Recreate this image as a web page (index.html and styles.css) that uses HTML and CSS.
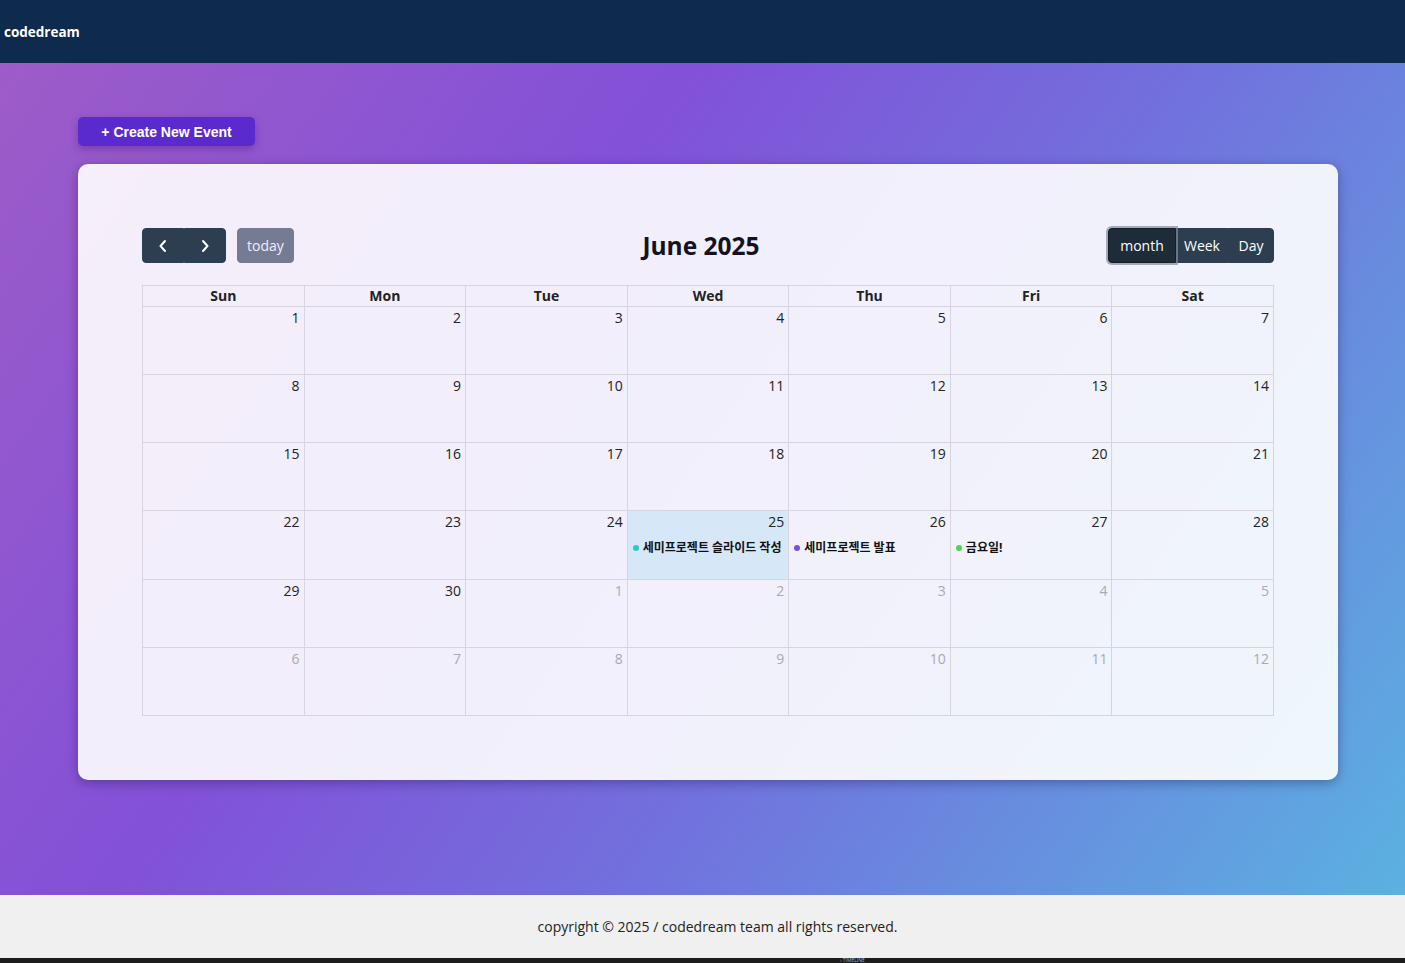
FILE: index.html
```html
<!DOCTYPE html>
<html lang="ko">
<head>
<meta charset="utf-8">
<title>codedream calendar</title>
<link rel="stylesheet" href="styles.css">
</head>
<body>
<header class="topbar"><span class="brand">codedream</span></header>
<main class="main">
  <button class="create-btn">+ Create New Event</button>
  <section class="card">
    <div class="toolbar">
      <div class="tb-left">
        <div class="btn-group">
          <button class="fc-btn icon-btn" aria-label="prev"><svg width="10" height="14" viewBox="0 0 10 14"><path d="M7 2 L2.5 7 L7 12" fill="none" stroke="#fff" stroke-width="2" stroke-linecap="round" stroke-linejoin="round"/></svg></button>
          <button class="fc-btn icon-btn" aria-label="next"><svg width="10" height="14" viewBox="0 0 10 14"><path d="M3 2 L7.5 7 L3 12" fill="none" stroke="#fff" stroke-width="2" stroke-linecap="round" stroke-linejoin="round"/></svg></button>
        </div>
        <button class="fc-btn today-btn">today</button>
      </div>
      <h2 class="title">June 2025</h2>
      <div class="btn-group views">
        <button class="fc-btn view v-month active">month</button>
        <button class="fc-btn view v-week">Week</button>
        <button class="fc-btn view v-day">Day</button>
      </div>
    </div>
    <div class="grid">
      <div class="head">Sun</div><div class="head">Mon</div><div class="head">Tue</div><div class="head">Wed</div><div class="head">Thu</div><div class="head">Fri</div><div class="head">Sat</div>
      <div class="body">
        <div class="day"><span class="num">1</span></div>
        <div class="day"><span class="num">2</span></div>
        <div class="day"><span class="num">3</span></div>
        <div class="day"><span class="num">4</span></div>
        <div class="day"><span class="num">5</span></div>
        <div class="day"><span class="num">6</span></div>
        <div class="day"><span class="num">7</span></div>
        <div class="day"><span class="num">8</span></div>
        <div class="day"><span class="num">9</span></div>
        <div class="day"><span class="num">10</span></div>
        <div class="day"><span class="num">11</span></div>
        <div class="day"><span class="num">12</span></div>
        <div class="day"><span class="num">13</span></div>
        <div class="day"><span class="num">14</span></div>
        <div class="day"><span class="num">15</span></div>
        <div class="day"><span class="num">16</span></div>
        <div class="day"><span class="num">17</span></div>
        <div class="day"><span class="num">18</span></div>
        <div class="day"><span class="num">19</span></div>
        <div class="day"><span class="num">20</span></div>
        <div class="day"><span class="num">21</span></div>
        <div class="day"><span class="num">22</span></div>
        <div class="day"><span class="num">23</span></div>
        <div class="day"><span class="num">24</span></div>
        <div class="day today"><span class="num">25</span><div class="event"><i class="dot dot-teal"></i>세미프로젝트 슬라이드 작성</div></div>
        <div class="day"><span class="num">26</span><div class="event"><i class="dot dot-purple"></i>세미프로젝트 발표</div></div>
        <div class="day"><span class="num">27</span><div class="event"><i class="dot dot-green"></i>금요일!</div></div>
        <div class="day"><span class="num">28</span></div>
        <div class="day"><span class="num">29</span></div>
        <div class="day"><span class="num">30</span></div>
        <div class="day other"><span class="num">1</span></div>
        <div class="day other"><span class="num">2</span></div>
        <div class="day other"><span class="num">3</span></div>
        <div class="day other"><span class="num">4</span></div>
        <div class="day other"><span class="num">5</span></div>
        <div class="day other"><span class="num">6</span></div>
        <div class="day other"><span class="num">7</span></div>
        <div class="day other"><span class="num">8</span></div>
        <div class="day other"><span class="num">9</span></div>
        <div class="day other"><span class="num">10</span></div>
        <div class="day other"><span class="num">11</span></div>
        <div class="day other"><span class="num">12</span></div>
      </div>
    </div>
  </section>
</main>
<footer class="footer">copyright © 2025 / codedream team all rights reserved.</footer>
<div class="strip"><span class="strip-text">› TIMELINE</span></div>
</body>
</html>
```

FILE: styles.css
```css
* { box-sizing: border-box; }
html, body { margin: 0; padding: 0; }
body {
  font-family: "Open Sans", "Noto Sans CJK KR", sans-serif;
  color: #222;
  overflow: hidden;
}
.topbar {
  height: 63px;
  background: #0e2a4d;
  display: flex;
  align-items: center;
  padding-left: 4px;
}
.brand {
  color: #fff;
  font-weight: 700;
  font-size: 13.5px;
}
.main {
  height: 832px;
  padding: 54px 67px 0 78px;
  background: linear-gradient(125deg, #9d5cc8 0%, #8251d8 35%, #7270dd 60%, #5bb1e1 100%);
}
.create-btn {
  display: block;
  height: 29px;
  width: 177px;
  border: none;
  border-radius: 5px;
  background: #5b2ace;
  color: #fff;
  font-family: "Liberation Sans", Arial, sans-serif;
  font-weight: 700;
  font-size: 14px;
  box-shadow: 0 3px 8px rgba(40, 0, 90, 0.3);
  margin-bottom: 18px;
  padding: 0;
}
.card {
  width: 1260px;
  background: rgba(255, 255, 255, 0.9);
  border-radius: 10px;
  box-shadow: 0 3px 12px rgba(20, 10, 60, 0.35);
  padding: 64px;
}
.toolbar {
  display: flex;
  justify-content: space-between;
  align-items: center;
  height: 35px;
  margin-bottom: 22px;
}
.tb-left { display: flex; align-items: center; gap: 11px; }
.btn-group { display: flex; }
.fc-btn {
  height: 35px;
  border: 1px solid #2c3e50;
  background: #2c3e50;
  color: #fff;
  font-family: "Open Sans", sans-serif;
  font-size: 14px;
  padding: 0;
  margin: 0;
  border-radius: 0;
  display: flex;
  align-items: center;
  justify-content: center;
}
.btn-group .fc-btn:first-child { border-radius: 4px 0 0 4px; }
.btn-group .fc-btn:last-child { border-radius: 0 4px 4px 0; }
.icon-btn { width: 42px; }
.today-btn {
  width: 57px;
  border-radius: 4px;
  background: #767b94;
  border-color: #767b94;
  color: #eef;
}
.title {
  margin: 0;
  font-size: 24.5px;
  font-weight: 700;
  color: #14121f;
}
.v-month { width: 68px; }
.v-week { width: 52px; }
.v-day { width: 46px; }
.views .active {
  background: #1e2b38;
  border-color: #151e27;
  box-shadow: 0 0 0 2px rgba(130, 140, 158, 0.7);
  position: relative;
  z-index: 1;
}
.grid {
  display: grid;
  grid-template-columns: repeat(7, 1fr);
  border-top: 1px solid #d7d4e0;
  border-left: 1px solid #d7d4e0;
}
.head {
  height: 21px;
  border-right: 1px solid #d7d4e0;
  border-bottom: 1px solid #d7d4e0;
  font-weight: 700;
  font-size: 14px;
  text-align: center;
  line-height: 20px;
}
.body {
  grid-column: 1 / -1;
  display: grid;
  grid-template-columns: repeat(7, 1fr);
  grid-auto-rows: 1fr;
  height: 409px;
}
.day {
  border-right: 1px solid #d7d4e0;
  border-bottom: 1px solid #d7d4e0;
  padding: 1px 4px 0 4px;
  display: flex;
  flex-direction: column;
  align-items: stretch;
  font-size: 14px;
}
.num { text-align: right; line-height: 20px; color: #222; }
.other .num { color: #a9a8b3; }
.today { background: #d6e7f8; }
.event {
  margin-top: 8px;
  display: flex;
  align-items: center;
  font-weight: 700;
  font-size: 12px;
  line-height: 16px;
  color: #111;
  white-space: nowrap;
}
.dot {
  width: 6px;
  height: 6px;
  border-radius: 50%;
  margin: 0 4px 0 1px;
  flex: none;
}
.dot-teal { background: #27c9c4; }
.dot-purple { background: #7b4fdc; }
.dot-green { background: #4ed651; }
.footer {
  height: 63px;
  background: #f0f0f0;
  display: flex;
  align-items: center;
  justify-content: center;
  padding-left: 30px;
  font-size: 14px;
  color: #222;
}
.strip {
  height: 5px;
  background: #1c1c1c;
  padding-left: 840px;
}
.strip-text {
  display: block;
  font-size: 5px;
  line-height: 5px;
  color: #9fb6cf;
  font-family: "Open Sans", sans-serif;
}
```
